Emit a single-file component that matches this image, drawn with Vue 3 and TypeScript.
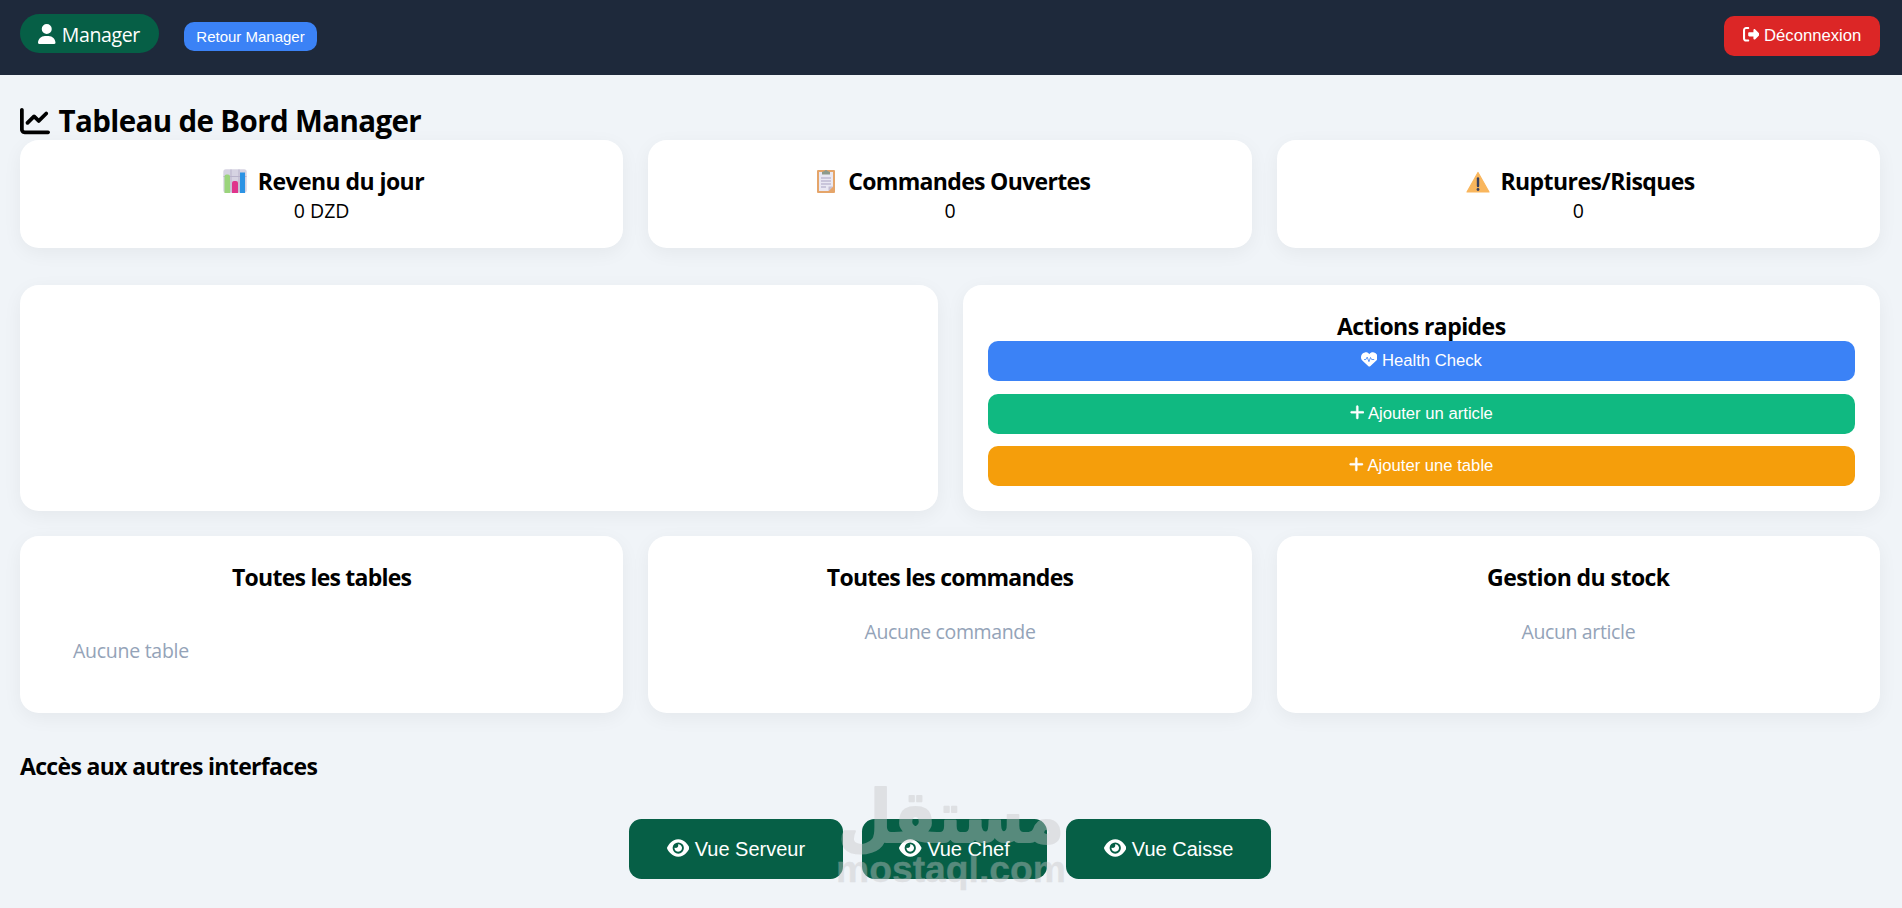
<script setup lang="ts">
interface IconShape {
  width: number
  path: string
}

const icons: Record<string, IconShape> = {
  user: {
    width: 448,
    path: 'M224 256A128 128 0 1 0 224 0a128 128 0 1 0 0 256zm-45.7 48C79.8 304 0 383.8 0 482.3C0 498.7 13.3 512 29.7 512H418.3c16.4 0 29.7-13.3 29.7-29.7C448 383.8 368.2 304 269.7 304H178.3z',
  },
  logout: {
    width: 512,
    path: 'M377.9 105.9L500.7 228.7c7.2 7.2 11.3 17.1 11.3 27.3s-4.1 20.1-11.3 27.3L377.9 406.1c-6.4 6.4-15 9.9-24 9.9c-18.7 0-33.9-15.2-33.9-33.9l0-62.1-128 0c-17.7 0-32-14.3-32-32l0-64c0-17.7 14.3-32 32-32l128 0 0-62.1c0-18.7 15.2-33.9 33.9-33.9c9 0 17.6 3.6 24 9.9zM160 96L96 96c-17.7 0-32 14.3-32 32l0 256c0 17.7 14.3 32 32 32l64 0c17.7 0 32 14.3 32 32s-14.3 32-32 32l-64 0c-53 0-96-43-96-96L0 128C0 75 43 32 96 32l64 0c17.7 0 32 14.3 32 32s-14.3 32-32 32z',
  },
  chart: {
    width: 512,
    path: 'M64 64c0-17.7-14.3-32-32-32S0 46.3 0 64V400c0 44.2 35.8 80 80 80H480c17.7 0 32-14.3 32-32s-14.3-32-32-32H80c-8.8 0-16-7.2-16-16V64zm406.6 86.6c12.5-12.5 12.5-32.8 0-45.3s-32.8-12.5-45.3 0L320 210.7l-57.4-57.4c-12.5-12.5-32.8-12.5-45.3 0l-112 112c-12.5 12.5-12.5 32.8 0 45.3s32.8 12.5 45.3 0L240 221.3l57.4 57.4c12.5 12.5 32.8 12.5 45.3 0l128-128z',
  },
  heart: {
    width: 512,
    path: 'M47.6 300.4L228.3 469.1c7.5 7 17.4 10.9 27.7 10.9s20.2-3.9 27.7-10.9L464.4 300.4c30.4-28.3 47.6-68 47.6-109.5v-5.8c0-69.9-50.5-129.5-119.4-141C347 36.5 300.6 51.4 268 84L256 96 244 84c-32.6-32.6-79-47.5-124.6-39.9C50.5 55.6 0 115.2 0 185.1v5.8c0 41.5 17.2 81.2 47.6 109.5z',
  },
  plus: {
    width: 448,
    path: 'M256 80c0-17.7-14.3-32-32-32s-32 14.3-32 32V224H48c-17.7 0-32 14.3-32 32s14.3 32 32 32H192V432c0 17.7 14.3 32 32 32s32-14.3 32-32V288H400c17.7 0 32-14.3 32-32s-14.3-32-32-32H256V80z',
  },
  eye: {
    width: 576,
    path: 'M288 32c-80.8 0-145.5 36.8-192.6 80.6C48.6 156 17.3 208 2.5 243.7c-3.3 7.9-3.3 16.7 0 24.6C17.3 304 48.6 356 95.4 399.4C142.5 443.2 207.2 480 288 480s145.5-36.8 192.6-80.6c46.8-43.5 78.1-95.4 93-131.1c3.3-7.9 3.3-16.7 0-24.6c-14.9-35.7-46.2-87.7-93-131.1C433.5 68.8 368.8 32 288 32zM144 256a144 144 0 1 1 288 0 144 144 0 1 1 -288 0zm144-64c0 35.3-28.7 64-64 64c-7.1 0-13.9-1.2-20.3-3.3c-5.5-1.8-11.9 1.6-11.7 7.4c.3 6.9 1.3 13.8 3.2 20.7c13.7 51.2 66.4 81.6 117.6 67.9s81.6-66.4 67.9-117.6c-11.1-41.5-47.8-69.4-88.6-71.1c-5.8-.2-9.2 6.1-7.4 11.7c2.1 6.4 3.3 13.2 3.3 20.3z',
  },
}

const actions = [
  { label: 'Health Check', icon: 'heart', tone: 'blue' },
  { label: 'Ajouter un article', icon: 'plus', tone: 'green' },
  { label: 'Ajouter une table', icon: 'plus', tone: 'orange' },
]

const views = ['Vue Serveur', 'Vue Chef', 'Vue Caisse']
</script>

<template>
  <header class="topbar">
    <div class="topbar-left">
      <span class="role">
        <svg class="icon w-user" :viewBox="`0 0 ${icons.user.width} 512`"><path :d="icons.user.path" /></svg>
        Manager
      </span>
      <button class="back">Retour Manager</button>
    </div>
    <button class="logout">
      <svg class="icon" viewBox="0 0 512 512"><path :d="icons.logout.path" /></svg>
      Déconnexion
    </button>
  </header>

  <main class="content">
    <h2 class="title">
      <svg class="icon" viewBox="0 0 512 512"><path :d="icons.chart.path" /></svg>
      Tableau de Bord Manager
    </h2>

    <section class="grid three stats">
      <article class="card">
        <h3>
          <svg class="emoji" viewBox="0 0 24 24">
            <rect x="0.3" y="0.3" width="23.4" height="23.4" rx="2.5" fill="#d6d3e2" />
            <path d="M0.5 7.5h23M8 .5v23M16 .5v23" stroke="#b9b3cb" stroke-width="1" />
            <path d="M1.500 24V7.500a2 2 0 0 1 2-2h1.500a2 2 0 0 1 2 2V24z" fill="#9bd47c" />
            <path d="M9 24V14a2 2 0 0 1 2-2h2a2 2 0 0 1 2 2v10z" fill="#e0358c" />
            <path d="M17 24V3.500h5V24z" fill="#2c93e4" />
          </svg>
          <span>Revenu du jour</span>
        </h3>
        <p class="amount">0 DZD</p>
      </article>
      <article class="card">
        <h3>
          <svg class="emoji" viewBox="0 0 24 24">
            <rect x="3" y="1" width="18" height="23" rx="1" fill="#e5a56a" />
            <path d="M5 3h14v14.500l-4.500 4.500H5z" fill="#e9e8f3" />
            <path d="M14.500 22v-4.500H19z" fill="#c3bed3" />
            <path d="M7 9h10M7 12h10M7 15h10M7 18h5" stroke="#a9a3c2" stroke-width="1" />
            <path d="M8 5.500V3l2.500-1a1.600 1.600 0 0 1 3 0L16 3v2.500z" fill="#8d9a8b" />
          </svg>
          <span class="snug">Commandes Ouvertes</span>
        </h3>
        <p class="amount">0</p>
      </article>
      <article class="card">
        <h3>
          <svg class="emoji" viewBox="0 0 24 24">
            <path d="M12 3.500L23 23H1z" fill="#f9b65d" stroke="#f9b65d" stroke-width="1.200" stroke-linejoin="round" />
            <path d="M12 9.500v7.500" stroke="#38405f" stroke-width="2.400" stroke-linecap="round" />
            <circle cx="12" cy="20.500" r="1.400" fill="#38405f" />
          </svg>
          <span>Ruptures/Risques</span>
        </h3>
        <p class="amount">0</p>
      </article>
    </section>

    <section class="grid two">
      <article class="card"></article>
      <article class="card">
        <h3>Actions rapides</h3>
        <div class="actions">
          <button v-for="a in actions" :key="a.label" :class="['action', a.tone]">
            <svg class="icon" :class="{ 'w-plus': a.icon === 'plus' }" :viewBox="`0 0 ${icons[a.icon].width} 512`">
              <path :d="icons[a.icon].path" />
              <path v-if="a.icon === 'heart'" class="pulse" d="M96 262h52l42-74 54 140 48-128 36 62h78" />
            </svg>
            {{ a.label }}
          </button>
        </div>
      </article>
    </section>

    <section class="grid three lists">
      <article class="card">
        <h3 class="tight">Toutes les tables</h3>
        <p class="empty inset">Aucune table</p>
      </article>
      <article class="card">
        <h3 class="tight">Toutes les commandes</h3>
        <p class="empty">Aucune commande</p>
      </article>
      <article class="card">
        <h3>Gestion du stock</h3>
        <p class="empty">Aucun article</p>
      </article>
    </section>

    <h3 class="access-title">Accès aux autres interfaces</h3>
    <nav class="views">
      <button v-for="v in views" :key="v" class="view">
        <svg class="icon w-eye" viewBox="0 0 576 512"><path :d="icons.eye.path" /></svg>
        {{ v }}
      </button>
    </nav>
  </main>

  <svg class="watermark" viewBox="0 0 240 110" aria-hidden="true">
    <g class="mark">
      <text class="arabic" x="7" y="62" textLength="226" lengthAdjust="spacingAndGlyphs" direction="ltr">مستقل</text>
      <text class="latin" x="5" y="102" textLength="230" lengthAdjust="spacingAndGlyphs">mostaql.com</text>
    </g>
  </svg>
</template>

<style>
html,
body {
  margin: 0;
  height: 100%;
  overflow: hidden;
  background: #f0f4f8;
}
#app {
  position: relative;
  height: 100%;
}
</style>

<style scoped>
.topbar,
.content {
  font-family: "Segoe UI", "Open Sans", "Noto Sans", sans-serif;
  font-size: 19.5px;
  line-height: 27px;
  color: #000;
}
.topbar {
  box-sizing: border-box;
  height: 75px;
  padding: 14px 22px 0 20px;
  display: flex;
  justify-content: space-between;
  align-items: flex-start;
  background: #1e293b;
  color: #fff;
}
.topbar-left {
  display: flex;
  gap: 25px;
}
.icon {
  width: 1em;
  height: 1em;
  vertical-align: -0.125em;
  fill: currentColor;
}
.w-user,
.w-plus {
  width: 0.875em;
}
.w-plus {
  stroke: currentColor;
  stroke-width: 10;
}
.w-eye {
  width: 1.125em;
}
.role {
  box-sizing: border-box;
  width: 139px;
  height: 39px;
  padding: 7px 0 0 18px;
  border-radius: 20px;
  background: #065f46;
  letter-spacing: -0.35px;
  white-space: nowrap;
}
.role .icon {
  width: 17.5px;
  height: 20px;
  margin-right: 1.5px;
}
button {
  border: 0;
  margin: 0;
  color: #fff;
  font-family: "Liberation Sans", Arial, sans-serif;
  font-size: 16.67px;
  white-space: nowrap;
}
.back {
  width: 133px;
  height: 29px;
  margin-top: 8px;
  padding: 0;
  border-radius: 10px;
  background: #3b82f6;
  font-size: 15px;
}
.logout {
  width: 156px;
  height: 40px;
  margin-top: 2px;
  padding: 0;
  border-radius: 10px;
  background: #dc2626;
}
.content {
  padding: 26px 22px 0 20px;
}
h2,
h3,
p {
  margin: 0;
}
.title {
  margin-bottom: -1px;
  font-size: 29.5px;
  line-height: 40px;
  letter-spacing: -0.62px;
}
.title .icon {
  width: 30px;
  height: 30px;
  margin-right: 1.5px;
}
h3 {
  box-sizing: border-box;
  height: 31px;
  padding-top: 1px;
  font-size: 23px;
  line-height: 31px;
  letter-spacing: -0.56px;
}
.tight {
  letter-spacing: -0.76px;
}
.snug {
  letter-spacing: -0.67px;
}
.grid {
  display: grid;
  gap: 25px;
}
.three {
  grid-template-columns: repeat(3, 1fr);
}
.two {
  grid-template-columns: repeat(2, 1fr);
  margin: 37px 0 25px;
}
.card {
  box-sizing: border-box;
  padding: 25px;
  border-radius: 18.75px;
  background: #fff;
  box-shadow: 0 5px 19px rgba(0, 0, 0, 0.05);
  text-align: center;
}
.stats .card {
  height: 108px;
}
.emoji {
  width: 24px;
  height: 24px;
  margin: 0 10.5px 0 4px;
  vertical-align: -3px;
}
.amount {
  padding-top: 1px;
}
.actions {
  display: grid;
  gap: 12.5px;
}
.action {
  height: 40px;
  padding: 0;
  border-radius: 10px;
}
.pulse {
  fill: none;
  stroke: #3b82f6;
  stroke-width: 26;
  stroke-linejoin: round;
}
.blue {
  background: #3b82f6;
}
.green {
  background: #10b981;
}
.orange {
  background: #f59e0b;
}
.lists .card {
  height: 177px;
}
.empty {
  margin-top: 26px;
  color: #94a3b8;
  letter-spacing: -0.36px;
}
.inset {
  margin: 45px 0 0 28px;
  text-align: left;
  letter-spacing: -0.27px;
}
.access-title {
  margin-top: 37px;
  letter-spacing: -0.66px;
}
.views {
  display: flex;
  justify-content: center;
  gap: 18.75px;
  margin-top: 38px;
}
.view {
  height: 60px;
  padding: 0 37.6px;
  border-radius: 12.5px;
  background: #065f46;
  font-size: 20px;
}
.watermark {
  position: absolute;
  left: 831px;
  top: 780px;
  width: 240px;
  height: 110px;
  overflow: visible;
  pointer-events: none;
}
.mark {
  fill: #c6c6c8;
  stroke: #c6c6c8;
  stroke-linejoin: round;
  opacity: 0.42;
}
.arabic {
  font-family: "DejaVu Sans", sans-serif;
  font-size: 72px;
  font-weight: 700;
  stroke-width: 2px;
}
.latin {
  font-family: "Liberation Sans", Arial, sans-serif;
  font-size: 36.5px;
  font-weight: 700;
  stroke-width: 0.3px;
}
</style>
